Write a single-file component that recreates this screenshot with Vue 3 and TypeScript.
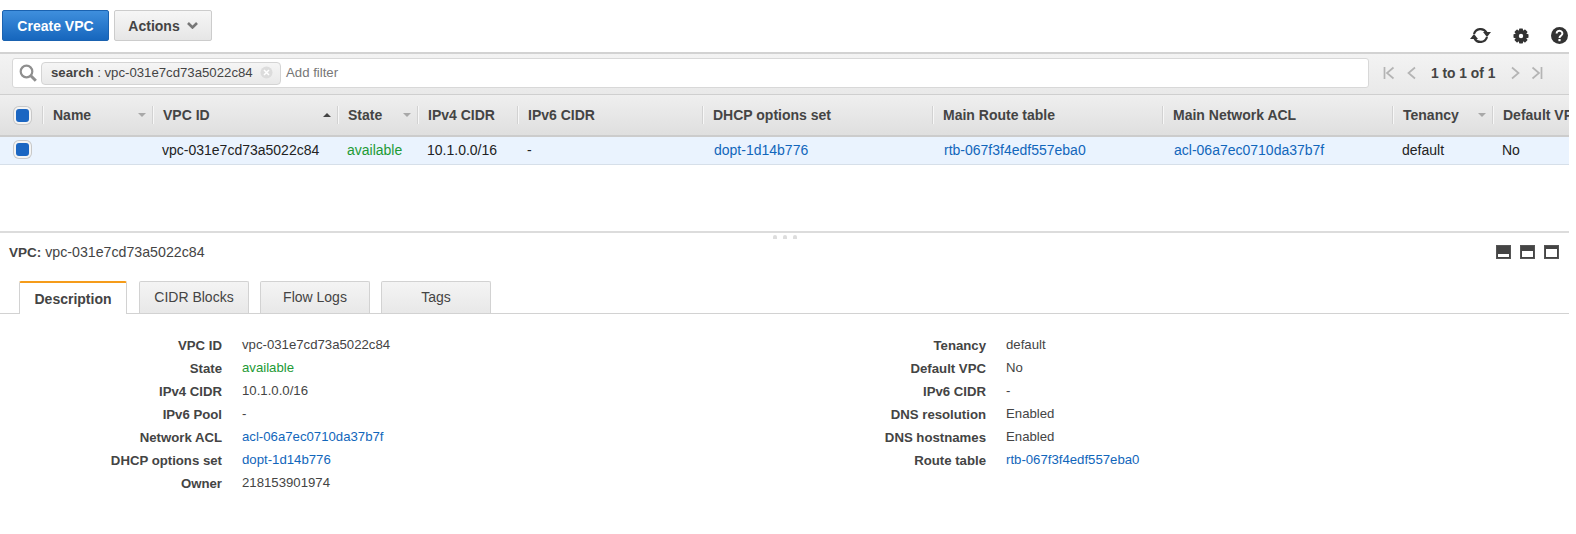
<template>
  <div class="page">
    <!-- top buttons -->
    <div class="top-bar">
      <button class="btn btn-primary">Create VPC</button>
      <button class="btn btn-actions">
        Actions
        <svg class="caret" width="11" height="7" viewBox="0 0 11 7">
          <path d="M1 1l4.5 4.5L10 1" fill="none" stroke="#777" stroke-width="2.6" />
        </svg>
      </button>
      <div class="top-icons">
        <svg width="21" height="17" viewBox="0 0 21 17">
          <path d="M4 7a6.8 6.8 0 0 1 12.4-1.6" fill="none" stroke="#333" stroke-width="2.2" />
          <path d="M13 5h8l-4 5z" fill="#333" />
          <path d="M17 10a6.8 6.8 0 0 1-12.4 1.6" fill="none" stroke="#333" stroke-width="2.2" />
          <path d="M0 12h8l-4-5z" fill="#333" />
        </svg>
        <svg width="16" height="16" viewBox="0 0 16 16">
          <g fill="#333">
            <circle cx="8" cy="8" r="6" />
            <rect x="6" y="0.5" width="4" height="15" rx="0.8" />
            <rect x="6" y="0.5" width="4" height="15" rx="0.8" transform="rotate(45 8 8)" />
            <rect x="6" y="0.5" width="4" height="15" rx="0.8" transform="rotate(90 8 8)" />
            <rect x="6" y="0.5" width="4" height="15" rx="0.8" transform="rotate(135 8 8)" />
          </g>
          <circle cx="8" cy="8" r="2.2" fill="#fff" />
        </svg>
        <svg width="17" height="17" viewBox="0 0 17 17">
          <circle cx="8.5" cy="8.5" r="8.5" fill="#333" />
          <path d="M5.6 6.4a2.9 2.6 0 1 1 4.6 2.1c-1 .7-1.7 1.1-1.7 2.4" fill="none" stroke="#fff" stroke-width="2" />
          <rect x="7.4" y="12" width="2.2" height="2.2" fill="#fff" />
        </svg>
      </div>
    </div>

    <div class="main">
      <!-- filter -->
      <div class="filter-bar">
        <div class="search-box">
          <svg width="18" height="18" viewBox="0 0 18 18">
            <circle cx="7.5" cy="7.5" r="5.8" fill="none" stroke="#8f8f8f" stroke-width="2.2" />
            <path d="M11.8 11.8l5 5" stroke="#8f8f8f" stroke-width="3" />
          </svg>
          <div class="chip">
            <b>search</b>&nbsp;:&nbsp;vpc-031e7cd73a5022c84
            <svg class="chip-x" width="13" height="13" viewBox="0 0 13 13">
              <circle cx="6.5" cy="6.5" r="6" fill="#dcdcdc" />
              <path d="M4 4l5 5M9 4l-5 5" stroke="#fff" stroke-width="1.5" />
            </svg>
          </div>
          <span class="add-filter">Add filter</span>
        </div>
        <div class="pager">
          <svg width="12" height="14" viewBox="0 0 12 14">
            <path d="M1.5 1v12M10.5 1.5L4 7l6.5 5.5" fill="none" stroke="#b4b4b4" stroke-width="1.7" />
          </svg>
          <svg width="9" height="14" viewBox="0 0 9 14">
            <path d="M8 1.5L1.5 7 8 12.5" fill="none" stroke="#b4b4b4" stroke-width="1.7" />
          </svg>
          <span class="pager-text">1 to 1 of 1</span>
          <svg width="9" height="14" viewBox="0 0 9 14">
            <path d="M1 1.5L7.5 7 1 12.5" fill="none" stroke="#b4b4b4" stroke-width="1.7" />
          </svg>
          <svg width="12" height="14" viewBox="0 0 12 14">
            <path d="M10.5 1v12M1.5 1.5L8 7l-6.5 5.5" fill="none" stroke="#b4b4b4" stroke-width="1.7" />
          </svg>
        </div>
      </div>

      <!-- table -->
      <div class="table-head grid-cols">
        <div class="check-cell"><span class="check"></span></div>
        <div v-for="col in columns" :key="col.label" class="head-cell">
          <span class="head-label">{{ col.label }}</span>
          <i v-if="col.sort" class="sort" :class="col.sort"></i>
        </div>
      </div>
      <div class="table-row grid-cols">
        <div class="check-cell"><span class="check"></span></div>
        <div class="cell"></div>
        <div class="cell">vpc-031e7cd73a5022c84</div>
        <div class="cell green">available</div>
        <div class="cell">10.1.0.0/16</div>
        <div class="cell">-</div>
        <div class="cell link">dopt-1d14b776</div>
        <div class="cell link">rtb-067f3f4edf557eba0</div>
        <div class="cell link">acl-06a7ec0710da37b7f</div>
        <div class="cell">default</div>
        <div class="cell">No</div>
      </div>

      <!-- details pane -->
      <div class="pane-top">
        <div class="handle"><i></i><i></i><i></i></div>
      </div>
      <div class="pane-title">
        <span class="title-text"><b>VPC:</b> vpc-031e7cd73a5022c84</span>
        <div class="pane-icons">
          <span v-for="h in [3, 6, 8]" :key="h" class="pane-icon">
            <i :style="{ height: h + 'px' }"></i>
          </span>
        </div>
      </div>

      <div class="tabs">
        <div v-for="(tab, index) in tabs" :key="tab" class="tab" :class="{ active: index === 0 }">{{ tab }}</div>
      </div>

      <div class="details">
        <div v-for="(list, i) in details" :key="i" class="detail-grid">
          <template v-for="item in list" :key="item.label">
            <div class="detail-label">{{ item.label }}</div>
            <div class="detail-value" :class="item.kind">{{ item.value }}</div>
          </template>
        </div>
      </div>
    </div>
  </div>
</template>

<script setup lang="ts">
interface Column {
  label: string
  sort?: 'up' | 'down'
}

interface Detail {
  label: string
  value: string
  kind?: 'green' | 'link'
}

const columns: Column[] = [
  { label: 'Name', sort: 'down' },
  { label: 'VPC ID', sort: 'up' },
  { label: 'State', sort: 'down' },
  { label: 'IPv4 CIDR' },
  { label: 'IPv6 CIDR' },
  { label: 'DHCP options set' },
  { label: 'Main Route table' },
  { label: 'Main Network ACL' },
  { label: 'Tenancy', sort: 'down' },
  { label: 'Default VPC' },
]

const tabs = ['Description', 'CIDR Blocks', 'Flow Logs', 'Tags']

const details: Detail[][] = [
  [
    { label: 'VPC ID', value: 'vpc-031e7cd73a5022c84' },
    { label: 'State', value: 'available', kind: 'green' },
    { label: 'IPv4 CIDR', value: '10.1.0.0/16' },
    { label: 'IPv6 Pool', value: '-' },
    { label: 'Network ACL', value: 'acl-06a7ec0710da37b7f', kind: 'link' },
    { label: 'DHCP options set', value: 'dopt-1d14b776', kind: 'link' },
    { label: 'Owner', value: '218153901974' },
  ],
  [
    { label: 'Tenancy', value: 'default' },
    { label: 'Default VPC', value: 'No' },
    { label: 'IPv6 CIDR', value: '-' },
    { label: 'DNS resolution', value: 'Enabled' },
    { label: 'DNS hostnames', value: 'Enabled' },
    { label: 'Route table', value: 'rtb-067f3f4edf557eba0', kind: 'link' },
  ],
]
</script>

<style>
html,
body {
  background: #fff;
}
</style>

<style scoped>
.page {
  width: 1576px;
  height: 534px;
  overflow: hidden;
  font-family: "Liberation Sans", Arial, sans-serif;
  font-size: 14px;
  color: #222;
  padding-right: 7px;
  box-sizing: border-box;
}

.top-bar {
  height: 52px;
  display: flex;
  padding: 10px 1px 0 2px;
  box-sizing: border-box;
  align-items: flex-start;
  gap: 5px;
}

.btn {
  height: 31px;
  border-radius: 2px;
  font: bold 14px "Liberation Sans", Arial, sans-serif;
  padding: 0;
  box-sizing: border-box;
}

.btn-primary {
  width: 107px;
  color: #fff;
  border: 1px solid #1a62b0;
  background: linear-gradient(#3f8fdd, #1666bd);
}

.btn-actions {
  width: 98px;
  color: #444;
  border: 1px solid #ccc;
  background: linear-gradient(#f6f6f6, #e6e6e6);
  display: flex;
  align-items: center;
  justify-content: center;
  gap: 7px;
}

.top-icons {
  margin-left: auto;
  margin-top: 17px;
  display: flex;
  align-items: center;
  gap: 22px;
}

.main {
  border-top: 2px solid #d2d2d2;
}

.filter-bar {
  height: 40px;
  display: flex;
  align-items: center;
  padding: 0 0 2px 12px;
  box-sizing: border-box;
  background: linear-gradient(#f3f3f3, #e9e9e9);
}

.search-box {
  width: 1357px;
  height: 30px;
  flex: none;
  display: flex;
  align-items: center;
  padding-left: 6px;
  box-sizing: border-box;
  background: #fff;
  border: 1px solid #d8d8d8;
  border-radius: 3px;
  font-size: 13.2px;
}

.chip {
  margin-left: 4px;
  width: 240px;
  height: 23px;
  flex: none;
  display: flex;
  align-items: center;
  padding: 0 0 2px 9px;
  box-sizing: border-box;
  background: linear-gradient(#f5f5f5, #e9e9e9);
  border: 1px solid #d4d4d4;
  border-radius: 4px;
  color: #444;
}

.chip-x {
  margin-left: 7px;
}

.add-filter {
  margin: 0 0 2px 5px;
  color: #777;
}

.pager {
  display: flex;
  align-items: center;
  margin-left: 14px;
}

.pager svg:nth-child(2) {
  margin-left: 12px;
}

.pager-text {
  margin: 0 16px 0 15px;
  font-size: 13.8px;
  font-weight: bold;
  color: #444;
  white-space: nowrap;
}

.pager svg:last-child {
  margin-left: 11px;
}

.grid-cols {
  display: grid;
  grid-template-columns: 42px 110px 185px 80px 100px 185px 230px 230px 230px 100px 77px;
  align-items: center;
}

.table-head {
  height: 43px;
  border-top: 1px solid #cfcfcf;
  border-bottom: 2px solid #cccccc;
  box-sizing: border-box;
  background: linear-gradient(#efefef, #dfdfdf);
}

.check-cell {
  padding-left: 16px;
  display: flex;
}

.check {
  width: 13px;
  height: 13px;
  border-radius: 3px;
  background: #1b66c2;
  box-shadow: 0 0 0 2px #f4f4f4, 0 0 0 3px #c8c8c8;
}

.head-cell {
  height: 18px;
  display: flex;
  align-items: center;
  padding-left: 10px;
  padding-right: 6px;
  border-left: 1px solid #d2d2d2;
  box-shadow: inset 1px 0 0 #f7f7f7;
  overflow: hidden;
  white-space: nowrap;
  font-weight: bold;
  color: #444;
}

.head-label {
  flex: none;
}

.sort {
  margin-left: auto;
  width: 0;
  height: 0;
  border-left: 4px solid transparent;
  border-right: 4px solid transparent;
}

.sort.down {
  border-top: 4px solid #a8a8a8;
}

.sort.up {
  border-bottom: 4px solid #444;
}

.table-row {
  height: 28px;
  padding-bottom: 2px;
  background: #eaf3fe;
  border-bottom: 1px solid #d6dfe9;
  box-sizing: border-box;
}

.cell {
  padding-left: 10px;
  white-space: nowrap;
  color: #222;
}

.green {
  color: #1d9a35;
}

.cell.link {
  padding-left: 12px;
}

.cell.link,
.detail-value.link {
  color: #1166bb;
}

.pane-top {
  margin-top: 66px;
  height: 14px;
  border-top: 2px solid #dcdcdc;
  box-sizing: border-box;
  display: flex;
  justify-content: center;
}

.handle {
  display: flex;
  gap: 6px;
  height: 4px;
  margin-top: 2px;
}

.handle i {
  width: 4px;
  height: 4px;
  border-radius: 2px 2px 0 0;
  background: #dddddd;
}

.pane-title {
  height: 14px;
  display: flex;
  align-items: center;
  justify-content: space-between;
  padding: 0 10px 0 9px;
  color: #444;
  font-size: 14.2px;
}

.title-text b {
  font-size: 13.5px;
}

.pane-icons {
  display: flex;
  gap: 9px;
}

.pane-icon {
  width: 15px;
  height: 14px;
  background: #444;
  border: 1px solid #555;
  box-sizing: border-box;
  display: flex;
  align-items: flex-end;
  padding: 0 1px 1px;
}

.pane-icon i {
  flex: 1;
  background: #fff;
}

.tabs {
  margin-top: 22px;
  height: 32px;
  display: flex;
  padding-left: 19px;
  border-bottom: 1px solid #d2d2d2;
}

.tab {
  width: 110px;
  height: 32px;
  margin-right: 11px;
  padding-bottom: 2px;
  box-sizing: border-box;
  display: flex;
  align-items: center;
  justify-content: center;
  border: 1px solid #d2d2d2;
  border-bottom: none;
  border-radius: 2px 2px 0 0;
  background: linear-gradient(#f4f4f4, #e8e8e8);
  color: #444;
}

.tab.active {
  width: 108px;
  height: 33px;
  margin-right: 12px;
  padding-bottom: 0;
  font-weight: bold;
  background: #fff;
  border-top: 2px solid #f59c1a;
  position: relative;
  z-index: 1;
}

.details {
  display: flex;
  margin-top: 19px;
}

.detail-grid {
  width: 764px;
  display: grid;
  grid-template-columns: 222px 1fr;
  column-gap: 20px;
  grid-auto-rows: 23px;
  align-items: center;
  align-content: start;
  font-size: 13.2px;
  color: #444;
}

.detail-label {
  padding-top: 2px;
  text-align: right;
  font-weight: bold;
}
</style>
